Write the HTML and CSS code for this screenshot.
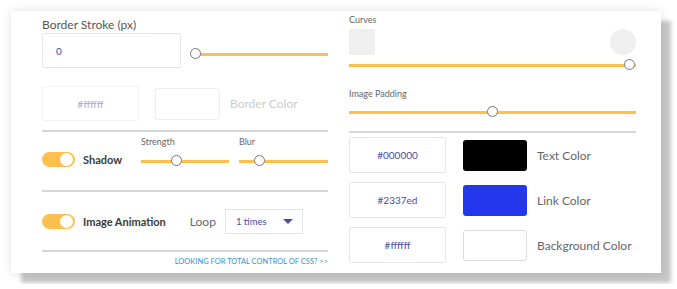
FILE: index.html
```html
<!DOCTYPE html>
<html lang="en">
<head>
  <meta charset="UTF-8">
  <title>Style settings</title>
  <link rel="stylesheet" href="styles.css">
</head>
<body>
<div class="panel">
  <div class="col left">
    <div class="label">Border Stroke (px)</div>
    <div class="stroke-row">
      <div class="field field-wide">0</div>
      <div class="slider stroke-slider"><span class="knob" style="left: 0%"></span></div>
    </div>

    <div class="color-row faded">
      <div class="field field-hex">#ffffff</div>
      <div class="swatch swatch-white"></div>
      <div class="color-name">Border Color</div>
    </div>

    <div class="divider"></div>

    <div class="toggle-row shadow-row">
      <div class="toggle"><span class="toggle-knob"></span></div>
      <div class="toggle-name">Shadow</div>
      <div class="mini">
        <div class="small-label">Strength</div>
        <div class="slider"><span class="knob" style="left: 41%"></span></div>
      </div>
      <div class="mini">
        <div class="small-label">Blur</div>
        <div class="slider"><span class="knob" style="left: 24%"></span></div>
      </div>
    </div>

    <div class="divider"></div>

    <div class="toggle-row anim-row">
      <div class="toggle"><span class="toggle-knob"></span></div>
      <div class="toggle-name">Image Animation</div>
      <div class="loop">Loop</div>
      <div class="select">
        <span>1 times</span>
        <span class="caret"></span>
      </div>
    </div>

    <div class="divider"></div>

    <a class="css-link" href="#">LOOKING FOR TOTAL CONTROL OF CSS? &gt;&gt;</a>
  </div>

  <div class="col right">
    <div class="small-label">Curves</div>
    <div class="curves">
      <div class="shape square"></div>
      <div class="shape circle"></div>
    </div>
    <div class="slider curves-slider"><span class="knob" style="left: 98%"></span></div>

    <div class="small-label padding-label">Image Padding</div>
    <div class="slider padding-slider"><span class="knob" style="left: 50%"></span></div>

    <div class="divider right-divider"></div>

    <div class="color-row">
      <div class="field field-hex">#000000</div>
      <div class="swatch" style="background: #000000"></div>
      <div class="color-name">Text Color</div>
    </div>
    <div class="color-row">
      <div class="field field-hex">#2337ed</div>
      <div class="swatch" style="background: #2337ed"></div>
      <div class="color-name">Link Color</div>
    </div>
    <div class="color-row">
      <div class="field field-hex">#ffffff</div>
      <div class="swatch swatch-white"></div>
      <div class="color-name">Background Color</div>
    </div>
  </div>
</div>
</body>
</html>
```

FILE: styles.css
```css
body {
  margin: 0;
  padding: 11px;
  background-color: #ffffff;
  font-family: Lato, "Liberation Sans", sans-serif;
  color: #555;
}
.panel {
  width: 650px;
  height: 262px;
  box-sizing: border-box;
  padding: 0 25px 0 31px;
  background-color: white;
  display: grid;
  grid-template-columns: 286px 287px;
  column-gap: 21px;
  box-shadow: 10px 10px 4px rgba(0,0,0,0.22), 0 0 10px rgba(0,0,0,0.12);
}
.col {
  display: flex;
  flex-direction: column;
}
.label {
  font-size: 12px;
  margin-top: 6px;
  height: 16px;
  line-height: 16px;
}
.small-label {
  font-size: 9px;
  color: #666;
  line-height: 12px;
}
.field {
  box-sizing: border-box;
  border: 1px solid #e6e6e6;
  border-radius: 2px;
  color: #4b4ba6;
  font-size: 10px;
  display: flex;
  align-items: center;
}
.field-wide {
  width: 139px;
  height: 35px;
  padding-left: 13px;
}
.field-hex {
  width: 97px;
  height: 36px;
  justify-content: center;
}
.stroke-row {
  display: flex;
  align-items: flex-end;
  margin-top: 0;
  gap: 15px;
}
.stroke-slider {
  flex: 1;
  margin-bottom: 12px;
}
.slider {
  position: relative;
  height: 3px;
  background-color: #fdc04f;
}
.knob {
  position: absolute;
  top: -5px;
  width: 11px;
  height: 11px;
  margin-left: -6px;
  box-sizing: border-box;
  border: 1px solid #777;
  border-radius: 50%;
  background-color: white;
}
.color-row {
  display: flex;
  align-items: center;
  margin-bottom: 9px;
}
.faded {
  opacity: 0.5;
  margin-top: 18px;
}
.faded .field-hex {
  height: 35px;
}
.swatch {
  width: 64px;
  height: 31px;
  margin-left: 17px;
  box-sizing: border-box;
  border-radius: 3px;
}
.faded .swatch {
  width: 65px;
  height: 32px;
  margin-left: 16px;
}
.swatch-white {
  border: 1px solid #ddd;
  background-color: white;
}
.color-name {
  margin-left: 10px;
  font-size: 12px;
  color: #666;
}
.faded .color-name {
  color: #999;
}
.divider {
  height: 2px;
  background-color: #d6d6d6;
}
.toggle-row {
  display: flex;
  align-items: center;
  height: 58px;
}
.toggle {
  position: relative;
  width: 33px;
  height: 15px;
  border-radius: 8px;
  background-color: #fdc04f;
}
.toggle-knob {
  position: absolute;
  right: 2px;
  top: 1px;
  width: 13px;
  height: 13px;
  border-radius: 50%;
  background-color: white;
}
.toggle-name {
  margin-left: 8px;
  font-size: 11px;
  font-weight: bold;
  color: #3a3a3a;
}
.shadow-row {
  align-items: flex-start;
}
.shadow-row .toggle {
  margin-top: 20px;
}
.shadow-row .toggle-name {
  margin-top: 20px;
  line-height: 15px;
  width: 58px;
}
.mini {
  display: flex;
  flex-direction: column;
  margin-top: 4px;
}
.mini .slider {
  margin-top: 12px;
}
.mini:nth-child(3) {
  width: 88px;
}
.mini:nth-child(4) {
  width: 89px;
  margin-left: 10px;
}
.loop {
  margin-left: 24px;
  font-size: 12px;
  color: #666;
}
.select {
  box-sizing: border-box;
  width: 78px;
  height: 25px;
  margin-left: 9px;
  padding: 0 9px 0 10px;
  border: 1px solid #e3e3e3;
  display: flex;
  align-items: center;
  justify-content: space-between;
  font-size: 9.5px;
  color: #4b4ba6;
}
.caret {
  width: 0;
  height: 0;
  border-left: 5px solid transparent;
  border-right: 5px solid transparent;
  border-top: 5px solid #4b4ba6;
}
.css-link {
  align-self: flex-end;
  margin-top: 5px;
  font-size: 7.5px;
  color: #3b8fd4;
  text-decoration: none;
}
.right .small-label:first-child {
  margin-top: 3px;
}
.curves {
  display: flex;
  justify-content: space-between;
  margin-top: 3px;
}
.shape {
  width: 26px;
  height: 26px;
  background-color: #efefef;
}
.circle {
  border-radius: 50%;
}
.curves-slider {
  margin-top: 9px;
}
.padding-label {
  margin-top: 21px;
}
.padding-slider {
  margin-top: 11px;
}
.right-divider {
  margin-top: 17px;
  margin-bottom: 4px;
}
```
